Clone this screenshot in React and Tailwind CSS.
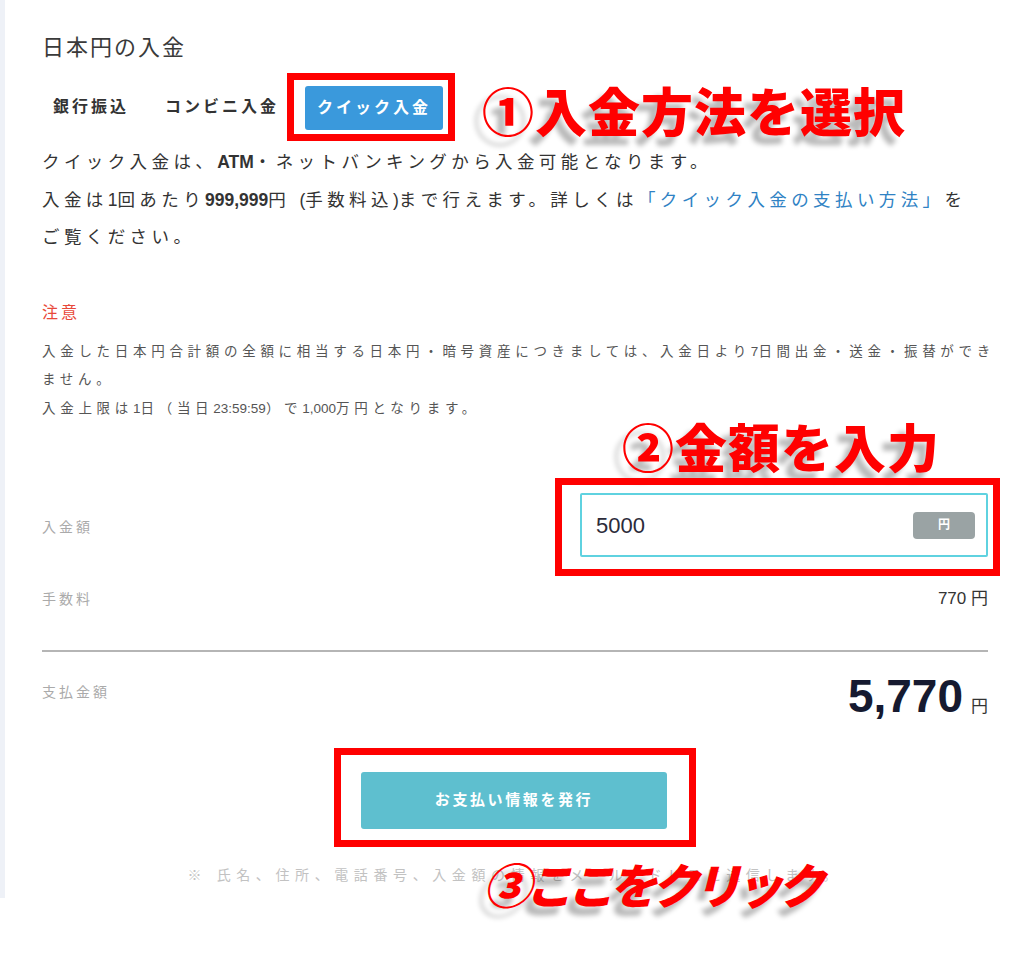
import React from 'react';

const FONT = { fontFamily: '"Liberation Sans", "Noto Sans CJK JP", sans-serif' };

const Callout = ({ children, className = '' }) => (
  <span
    className={`font-black text-[#ff0000] leading-none whitespace-nowrap [text-shadow:-8px_9px_5px_rgba(0,0,0,0.28)] ${className}`}
    style={{ fontFamily: '"Noto Sans CJK JP", sans-serif' }}
  >
    {children}
  </span>
);

const App = () => {
  return (
    <div className="flex items-start w-[1024px] min-h-[957px] bg-white" style={FONT}>
      <div className="w-[5px] h-[898px] bg-[#eef1f7] shrink-0" />
      <div className="w-[1019px] min-w-0 shrink-0 pl-[37px] pr-[36px] pt-[33px] text-[#333]">
        <h1 className="text-[22px] leading-[30px] font-normal tracking-[2px] text-[#3a3a3a]">日本円の入金</h1>

        <div className="mt-[7px] flex items-center h-[74px]">
          <span className="ml-[11px] text-[16px] font-bold tracking-[3px]">銀行振込</span>
          <span className="ml-[36px] text-[16px] font-bold tracking-[3px]">コンビニ入金</span>
          <div className="ml-[8px] border-[7px] border-[#ff0000] pl-[11px] pr-[5px] pt-[6px] pb-[4px]">
            <button className="h-[44px] px-[12px] rounded-[3px] bg-[#3a99dc] text-white text-[16px] font-bold tracking-[3px]">
              クイック入金
            </button>
          </div>
          <Callout className="ml-[27px] mt-[6px] text-[52px] tracking-[1px]">①入金方法を選択</Callout>
        </div>

        <p className="text-[17.5px] leading-[37.5px] tracking-[4.4px] whitespace-nowrap">
          クイック入金は、<b className="tracking-normal">ATM</b>・ネットバンキングから入金可能となります。
          <br />
          入金は<span className="tracking-normal">1</span>回あたり<b className="tracking-normal">999,999</b>円 <span className="tracking-normal">(</span>手数料込<span className="tracking-normal">)</span>まで行えます。詳しくは
          <span className="text-[#2f82c4]">「クイック入金の支払い方法」</span>を
          <br />
          ご覧ください。
        </p>

        <div className="mt-[44px] text-[16px] leading-[24px] tracking-[3px] text-[#e8493a]">注意</div>
        <p className="mt-[13px] text-[13.5px] leading-[28.5px] tracking-[4.7px] text-[#555] whitespace-nowrap">
          入金した日本円合計額の全額に相当する日本円・暗号資産につきましては、入金日より<span className="tracking-normal">7</span>日間出金・送金・振替ができ
          <br />
          ません。
          <br />
          入金上限は<span className="tracking-normal">1</span>日（当日<span className="tracking-normal">23:59:59</span>）で<span className="tracking-normal">1,000</span>万円となります。
        </p>

        <div className="mt-[-3px] pl-[580px] h-[52px] flex items-center">
          <Callout className="text-[52px] tracking-[1px]">②金額を入力</Callout>
        </div>

        <div className="mt-[6px] flex items-center justify-between">
          <span className="text-[14px] tracking-[3px] text-[#aaa]">入金額</span>
          <div className="mr-[-12px] border-[7px] border-[#ff0000] pl-[18px] pr-[5px] pt-[8px] pb-[12px]">
            <div className="w-[408px] h-[64px] border-2 border-[#5fd2e0] rounded-[2px] flex items-center justify-between pl-[14px] pr-[11px]">
              <span className="text-[22px] text-[#2b2b3a]">5000</span>
              <span className="w-[62px] h-[27px] rounded-[4px] bg-[#9aa3a4] text-white text-[12px] font-bold flex items-center justify-center">
                円
              </span>
            </div>
          </div>
        </div>

        <div className="mt-[11px] flex items-center justify-between h-[24px]">
          <span className="text-[14px] tracking-[3px] text-[#aaa]">手数料</span>
          <span className="text-[17px] text-[#333]">770 円</span>
        </div>

        <div className="mt-[39px] h-[2px] bg-[#b5b5b5]" />

        <div className="mt-[20px] flex items-center justify-between h-[48px]">
          <span className="text-[14px] tracking-[3px] text-[#aaa] mb-[8px]">支払金額</span>
          <div className="flex items-baseline gap-[8px]">
            <span className="text-[46px] font-bold leading-none text-[#161a30]">5,770</span>
            <span className="text-[17px] text-[#333]">円</span>
          </div>
        </div>

        <div className="mt-[28px] flex justify-center">
          <div className="border-[7px] border-[#ff0000] pl-[20px] pr-[22px] pt-[17px] pb-[11px]">
            <button className="w-[306px] h-[57px] rounded-[3px] bg-[#5ebfcf] text-white text-[15px] font-bold tracking-[2.6px]">
              お支払い情報を発行
            </button>
          </div>
        </div>

        <div className="relative mt-[18px] flex justify-center">
          <span className="text-[14px] leading-[20px] tracking-[5.6px] text-[#c2c2c2] whitespace-nowrap">
            ※ 氏名、住所、電話番号、入金額の情報をメールアドレスに送信します。
          </span>
          <Callout className="absolute left-[441px] top-[-6px] text-[48px] italic tracking-[-6px]">③ここをクリック</Callout>
        </div>
      </div>
    </div>
  );
};

export default App;
